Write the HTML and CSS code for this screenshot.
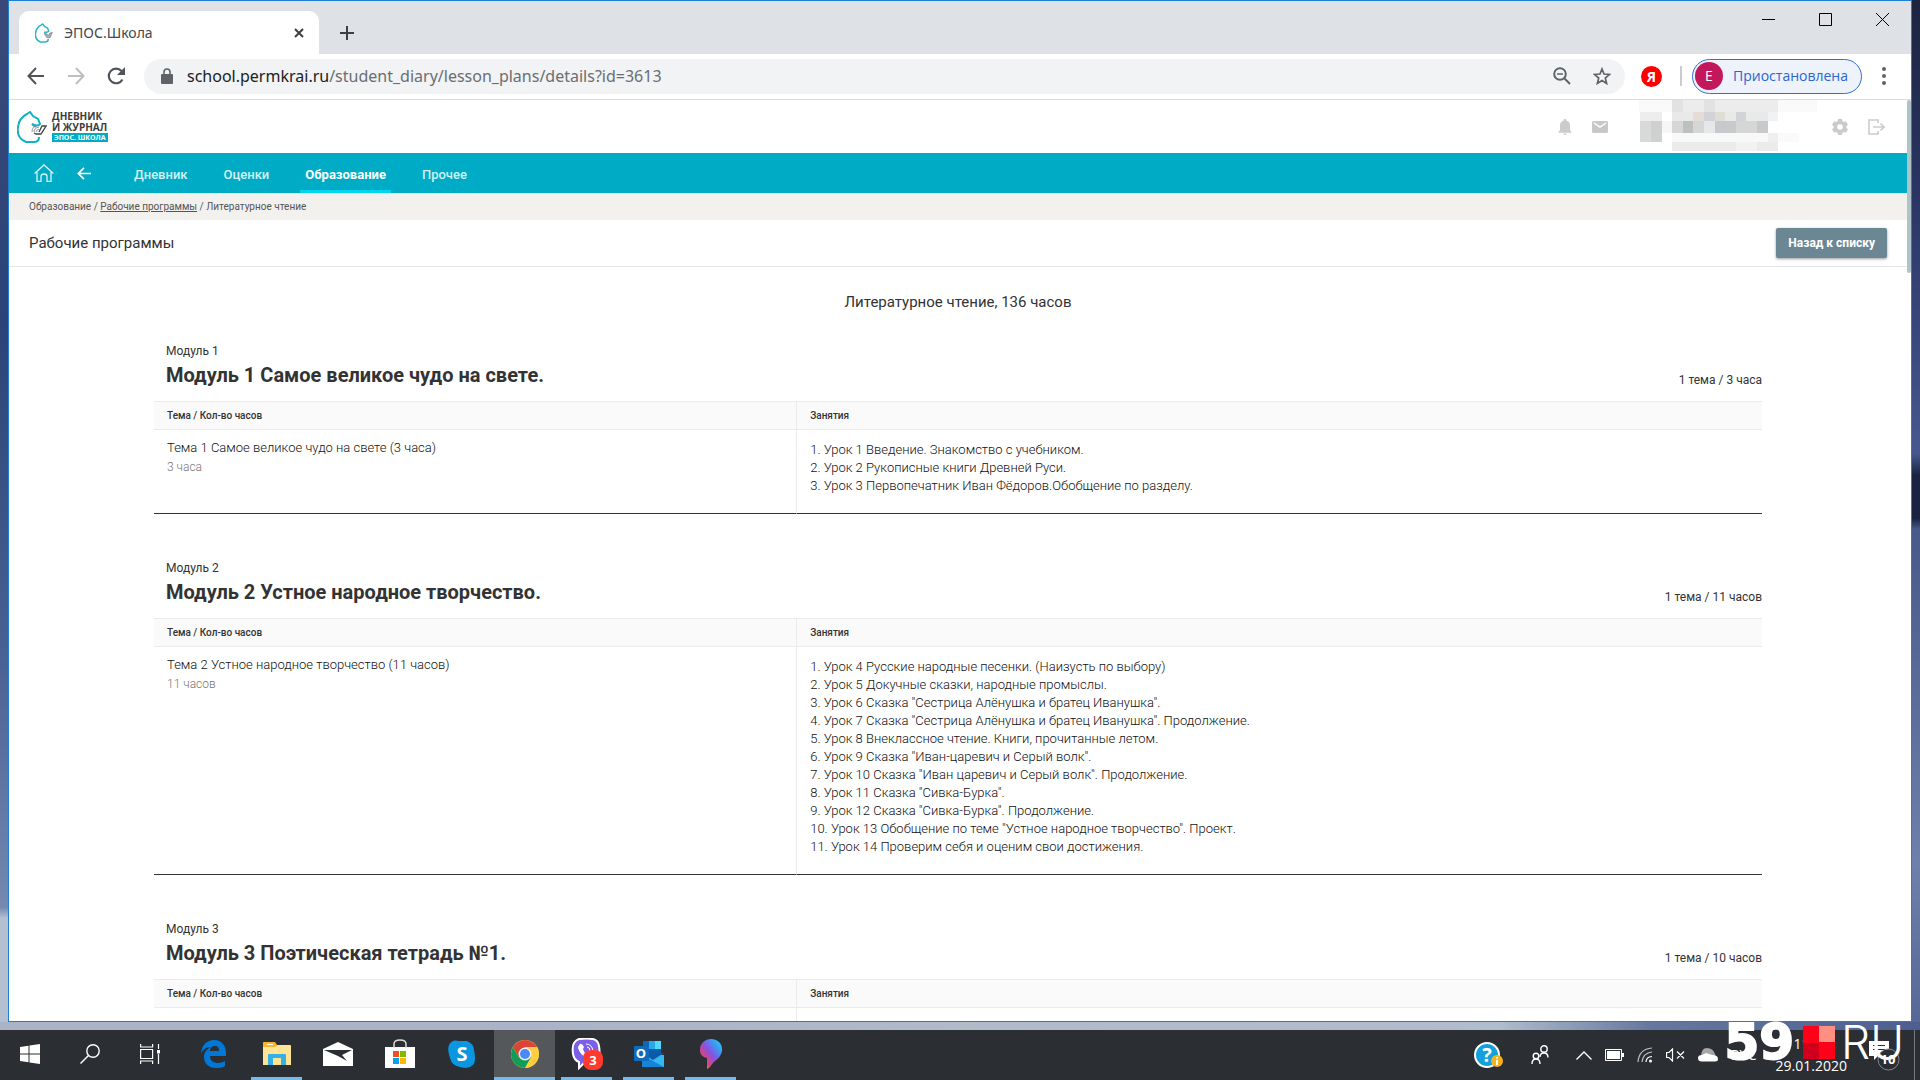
FILE: index.html
```html
<!DOCTYPE html>
<html lang="ru">
<head>
<meta charset="utf-8">
<title>ЭПОС.Школа</title>
<link rel="stylesheet" href="styles.css">
</head>
<body>
<div class="desktop">
  <div class="window">
    <div class="tabstrip">
      <div class="tab">
        <svg class="tab-logo" viewBox="0 0 30 32" fill="none"><path d="M22 26c0 4-2 5-5 5H9C2 28 0 22 1 16 2 8 6 5 10 3l3-2 3 4 5 3 2 5c-2 3-5 1-8 2" stroke="#28b6cb" stroke-width="2.500"/><path d="M15 17l5 7h5l4-9-4 1-3 4-3-3z" stroke="#777" fill="#aaa"/></svg>
        <span class="tab-title">ЭПОС.Школа</span>
        <button class="bare" aria-label="Закрыть вкладку"><svg width="10" height="10" viewBox="0 0 10 10" stroke="#3c4043" stroke-width="2"><path d="M1 1l8 8M9 1L1 9"/></svg></button>
      </div>
      <button class="bare new-tab" aria-label="Новая вкладка"><svg width="16" height="16" viewBox="0 0 16 16" stroke="#3c4043" stroke-width="2"><path d="M8 1v14M1 8h14"/></svg></button>
      <div class="window-buttons">
        <button class="bare" aria-label="Свернуть"><svg width="13" height="13" viewBox="0 0 13 13"><path d="M0 6.500h13" stroke="#000"/></svg></button>
        <button class="bare" aria-label="Развернуть"><svg width="13" height="13" viewBox="0 0 13 13"><path d="M.5.500h12v12H.5z" fill="none" stroke="#000"/></svg></button>
        <button class="bare" aria-label="Закрыть"><svg width="13" height="13" viewBox="0 0 13 13"><path d="M0 0l13 13M13 0L0 13" stroke="#000"/></svg></button>
      </div>
    </div>
    <div class="toolbar">
      <button class="bare" aria-label="Назад"><svg width="18" height="18" viewBox="0 0 18 18" fill="none" stroke="#50545a" stroke-width="2"><path d="M17 9H2M9 1L1.500 9 9 17"/></svg></button>
      <button class="bare" aria-label="Вперёд"><svg width="18" height="18" viewBox="0 0 18 18" fill="none" stroke="#bdbfc2" stroke-width="2"><path d="M1 9h15M9 1l7.500 8L9 17"/></svg></button>
      <button class="bare" aria-label="Обновить"><svg width="18" height="18" viewBox="0 0 18 18"><path d="M15.500 12.500A7.300 7.300 0 1 1 14.500 4" fill="none" stroke="#50545a" stroke-width="2.200"/><path d="M18 0v8h-8z" fill="#50545a"/></svg></button>
      <div class="omnibox">
        <svg width="12" height="16" viewBox="0 0 12 16"><path d="M1 6h10q1 0 1 1v8q0 1-1 1H1q-1 0-1-1V7q0-1 1-1z" fill="#5f6368"/><path d="M3 7V4a3 3 0 0 1 6 0v3" fill="none" stroke="#5f6368" stroke-width="1.600"/></svg>
        <div class="url"><span class="host">school.permkrai.ru</span>/student_diary/lesson_plans/details?id=3613</div>
        <button class="bare" aria-label="Масштаб"><svg width="18" height="18" viewBox="0 0 18 18" fill="none" stroke="#5f6368" stroke-width="2"><circle cx="7" cy="7" r="5.800"/><path d="M11.500 11.500L17 17"/><path d="M4 7h6" stroke-width="1.500"/></svg></button>
        <button class="bare" aria-label="В закладки"><svg width="18" height="18" viewBox="0 0 18 18" fill="none" stroke="#5f6368" stroke-width="1.700"><path d="M9 2l2 5 5.500.4-4.200 3.600 1.300 5.400L9 13.500l-4.600 2.900L5.700 11 1.500 7.400 7 7z"/></svg></button>
      </div>
      <div class="yandex">Я</div>
      <div class="bar-sep"></div>
      <button class="profile"><span class="avatar">Е</span>Приостановлена</button>
      <button class="bare menu" aria-label="Меню"><svg width="4" height="18" viewBox="0 0 4 18" fill="#5f6368"><circle cx="2" cy="2" r="2"/><circle cx="2" cy="9" r="2"/><circle cx="2" cy="16" r="2"/></svg></button>
    </div>

    <div class="viewport">
      <div class="page">
        <header class="site-header">
          <a class="logo" href="#" aria-label="Дневник и журнал ЭПОС. Школа">
            <svg width="30" height="32" viewBox="0 0 30 32" fill="none"><path d="M22 26c0 4-2 5-5 5H9C2 28 0 22 1 16 2 8 6 5 10 3l3-2 3 4 5 3 2 5c-2 3-5 1-8 0 2 2 3 2 4 3" stroke="#14b0c6" stroke-width="2"/><path d="M17 22l2 1h5l5-8-4 0-3 6" stroke="#444" stroke-width="1.300"/><path d="M15 21q0-6 6-7M17 21q0-4 5-5M19 21q0-2 3-3" stroke="#888" stroke-width=".9"/></svg>
            <span class="logo-text"><span>ДНЕВНИК</span><span>И ЖУРНАЛ</span><span class="logo-badge">ЭПОС. ШКОЛА</span></span>
          </a>
          <div class="user-tools">
            <svg width="14" height="16" viewBox="0 0 14 16" fill="#cbcbcb"><path d="M7 0a1.300 1.300 0 0 0-1.300 1.500C3.300 2 2 4 2 6.500V11L.5 13v.7h13V13L12 11V6.500C12 4 10.700 2 8.300 1.500A1.300 1.300 0 0 0 7 0zM5.300 14.500h3.400a1.700 1.500 0 0 1-3.400 0z"/></svg>
            <svg class="mail" width="16" height="12" viewBox="0 0 16 12"><rect width="16" height="12" rx="1.500" fill="#c8c8c8"/><path d="M2 2l6 4 6-4" fill="none" stroke="#fff" stroke-width="1.500"/></svg>
            <svg class="redacted" viewBox="0 0 184 55" shape-rendering="crispEdges">
              <path fill="#ededed" d="M1 12h22v10H1z"/><path fill="#d8dad9" d="M1 22h11v22H1z"/><path fill="#cfd0d0" d="M12 22h11v22H12z"/><path fill="#f6f6f6" d="M23 22h11v12H23z"/>
              <path fill="#ececec" d="M34 0h110v12H34z"/><path fill="#e2e2e4" d="M34 0h11v12H34zM67 0h11v12H67z"/><path fill="#fafafa" d="M0 0h34v12H0zM144 0h40v12h-40z"/>
              <path fill="#e8e9e8" d="M34 12h110v10H34z"/><path fill="#d1d3d8" d="M67 12h11v10H67zM111 12h-11v10h11z"/><path fill="#e5dcd7" d="M56 12h11v10H56z"/><path fill="#deded4" d="M78 12h11v10H78z"/><path fill="#f0f2f3" d="M133 12h11v10h-11z"/>
              <path fill="#d5d7d7" d="M34 22h99v12H34z"/><path fill="#bcc1bd" d="M45 22h11v12H45z"/><path fill="#c8c9ca" d="M78 22h22v12H78zM122 22h11v12h-11z"/><path fill="#e5e8eb" d="M67 22h11v12H67z"/>
              <path fill="#f8f8f8" d="M34 34h110v10H34z"/><path fill="#efefef" d="M133 34h11v10h-11z"/><path fill="#fafafa" d="M144 34h22v10h-22z"/><path fill="#eaebeb" d="M34 44h110v9H34z"/><path fill="#f2f2f2" d="M100 44h22v9h-22z"/>
            </svg>
            <svg width="16" height="16" viewBox="0 0 16 16"><path fill="#cbcbcb" fill-rule="evenodd" d="M6 0h4l.5 2.200 1.300.8 2.200-.7 2 3.400L14.400 7v2L16 10.300l-2 3.400-2.200-.7-1.300.8L10 16H6l-.5-2.200-1.300-.8-2.200.7-2-3.400L1.600 9V7L0 5.700l2-3.400 2.200.7 1.300-.8zM8 5.200a2.800 2.800 0 1 0 0 5.600 2.800 2.800 0 0 0 0-5.600z"/></svg>
            <svg width="17" height="16" viewBox="0 0 17 16" fill="none" stroke="#cbcbcb" stroke-width="1.600"><path d="M10 4V1H1v14h9v-3M5 8h11M12.500 4.500L16 8l-3.500 3.500"/></svg>
          </div>
        </header>
        <nav class="site-nav">
          <a href="#" aria-label="Главная"><svg width="20" height="18" viewBox="0 0 20 18" fill="none" stroke="#d9f3f7" stroke-width="1.300"><path d="M.6 9.500L10 1l9.400 8.500M3 8v9.300h4v-5q0-2.300 3-2.300t3 2.300v5h4V8"/></svg></a>
          <a href="#" aria-label="Назад"><svg width="14" height="13" viewBox="0 0 14 13" fill="none" stroke="#fff" stroke-width="1.700"><path d="M14 6.500H1.500M7 .8L1.300 6.500 7 12.200"/></svg></a>
          <div class="nav-links">
            <a href="#">Дневник</a><a href="#">Оценки</a><a class="active" href="#">Образование</a><a href="#">Прочее</a>
          </div>
        </nav>
        <div class="crumbs">Образование / <a href="#">Рабочие программы</a> / Литературное чтение</div>
        <div class="title-row">
          <h1>Рабочие программы</h1>
          <button class="back">Назад к списку</button>
        </div>
        <main>
          <h2>Литературное чтение, 136 часов</h2>

          <section class="module">
            <div class="module-label">Модуль 1</div>
            <div class="module-head"><h3>Модуль 1 Самое великое чудо на свете.</h3><span>1 тема / 3 часа</span></div>
            <table>
              <thead><tr><th>Тема / Кол-во часов</th><th>Занятия</th></tr></thead>
              <tbody><tr>
                <td><div class="topic">Тема 1 Самое великое чудо на свете (3 часа)</div><div class="hours">3 часа</div></td>
                <td><ol>
                  <li>Урок 1 Введение. Знакомство с учебником.</li>
                  <li>Урок 2 Рукописные книги Древней Руси.</li>
                  <li>Урок 3 Первопечатник Иван Фёдоров.Обобщение по разделу.</li>
                </ol></td>
              </tr></tbody>
            </table>
          </section>

          <section class="module">
            <div class="module-label">Модуль 2</div>
            <div class="module-head"><h3>Модуль 2 Устное народное творчество.</h3><span>1 тема / 11 часов</span></div>
            <table>
              <thead><tr><th>Тема / Кол-во часов</th><th>Занятия</th></tr></thead>
              <tbody><tr>
                <td><div class="topic">Тема 2 Устное народное творчество (11 часов)</div><div class="hours">11 часов</div></td>
                <td><ol>
                  <li>Урок 4 Русские народные песенки. (Наизусть по выбору)</li>
                  <li>Урок 5 Докучные сказки, народные промыслы.</li>
                  <li>Урок 6 Сказка "Сестрица Алёнушка и братец Иванушка".</li>
                  <li>Урок 7 Сказка "Сестрица Алёнушка и братец Иванушка". Продолжение.</li>
                  <li>Урок 8 Внеклассное чтение. Книги, прочитанные летом.</li>
                  <li>Урок 9 Сказка "Иван-царевич и Серый волк".</li>
                  <li>Урок 10 Сказка "Иван царевич и Серый волк". Продолжение.</li>
                  <li>Урок 11 Сказка "Сивка-Бурка".</li>
                  <li>Урок 12 Сказка "Сивка-Бурка". Продолжение.</li>
                  <li>Урок 13 Обобщение по теме "Устное народное творчество". Проект.</li>
                  <li>Урок 14 Проверим себя и оценим свои достижения.</li>
                </ol></td>
              </tr></tbody>
            </table>
          </section>

          <section class="module">
            <div class="module-label">Модуль 3</div>
            <div class="module-head"><h3>Модуль 3 Поэтическая тетрадь №1.</h3><span>1 тема / 10 часов</span></div>
            <table>
              <thead><tr><th>Тема / Кол-во часов</th><th>Занятия</th></tr></thead>
              <tbody><tr><td></td><td class="pending"></td></tr></tbody>
            </table>
          </section>
        </main>
      </div>
      <div class="scrollbar"><div class="thumb"></div></div>
    </div>
  </div>

  <footer class="taskbar">
    <button class="task" aria-label="Пуск"><svg width="20" height="20" viewBox="0 0 20 20" fill="#fff"><path d="M0 3l8.500-1.300v7.800H0zM9.500 1.500L20 0v9.500H9.500zM0 10.500h8.500v7.800L0 17zM9.500 10.500H20V20L9.500 18.500z"/></svg></button>
    <button class="task" aria-label="Поиск"><svg width="20" height="20" viewBox="0 0 20 20" fill="none" stroke="#fff" stroke-width="1.400"><circle cx="13" cy="7" r="6.200"/><path d="M8.500 11.500L.5 19.500"/></svg></button>
    <button class="task" aria-label="Представление задач"><svg width="20" height="20" viewBox="0 0 20 20" fill="none" stroke="#fff" stroke-width="1.200"><path d="M.6 5.500h12v9H.6zM.6 0v3h12V0M.6 20v-3h12v3M18.500 0v5M18.500 10v10"/><path d="M17 6h3v3.500h-3z" fill="#fff" stroke="none"/></svg></button>
    <div class="apps">
    <button class="task wide" aria-label="Edge"><svg width="26" height="28" viewBox="0 0 26 28"><path fill="#0078d7" d="M0 13C1 5 6 0 13 0c8 0 12 6 12 13v3H9c0 5 4 7 8 7 3 0 5-1 7-2v5c-3 2-6 2-9 2C7 28 3 23 3 17c0-5 3-8 7-10-5 0-8 3-10 6zm9-2h9c0-3-1-5-4-5-3 0-5 2-5 5z"/></svg></button>
    <button class="task open" aria-label="Проводник"><svg width="28" height="24" viewBox="0 0 28 24"><path fill="#f6b62e" d="M0 1q0-1 1-1h11l2 3h13v7H0z"/><path fill="#fff" d="M4 2h6v1H4z"/><path fill="#ffe496" d="M0 5h12l3-2h12q1 0 1 1v19H0z"/><path fill="#35b0e6" d="M5 13q0-1 1-1h16q1 0 1 1v10h-5v-7h-8v7H5z"/></svg></button>
    <button class="task wide" aria-label="Почта"><svg width="30" height="24" viewBox="0 0 30 24"><path fill="#fff" d="M0 7L15 0l15 7v17H0z"/><path fill="#2b2e33" d="M1 8h28l-10 5 5 6-9-5z"/></svg></button>
    <button class="task wide" aria-label="Магазин"><svg width="30" height="30" viewBox="0 0 30 30"><path fill="#fff" d="M0 8h30v21H0z"/><path fill="none" stroke="#ddd" stroke-width="1.500" d="M9 9V5q0-4 6-4t6 4v4"/><path fill="#f25022" d="M8 12h6v6H8z"/><path fill="#7fba00" d="M15 12h6v6h-6z"/><path fill="#00a4ef" d="M8 19h6v6H8z"/><path fill="#ffb900" d="M15 19h6v6h-6z"/></svg></button>
    <button class="task wide" aria-label="Skype"><svg width="28" height="28" viewBox="0 0 28 28"><path fill="#0a96e0" d="M1 5Q4-1 11 1h8q7 3 7 9 1 4 1 9 0 8-9 9-3 0-6-1-8-1-10-9Q-1 10 1 5z"/><text x="14" y="21" text-anchor="middle" class="glyph-skype">S</text></svg></button>
    <button class="task open current" aria-label="Chrome"><svg width="28" height="28" viewBox="0 0 28 28"><circle cx="14" cy="14" r="14" fill="#fc4"/><path fill="#db4437" d="M1.900 7A14 14 0 0 1 26.100 7H14L8 17.500z"/><path fill="#0f9d58" d="M1.900 7A14 14 0 0 0 14 28l6-10.500-12 0z"/><path fill="#ffcd40" d="M26.100 7A14 14 0 0 1 14 28l6-10.500L20 8z"/><circle cx="14" cy="14" r="6.500" fill="#f1f1f1"/><circle cx="14" cy="14" r="5" fill="#4a8af4"/></svg></button>
    <button class="task open" aria-label="Viber"><svg width="32" height="32" viewBox="0 0 32 32"><path fill="#7c5fe8" stroke="#fff" stroke-width="2" d="M8 1q8-1 14 0 5 1 6 7 1 6 0 11-2 6-8 6h-7l-5 5v-6q-5-2-6-8-1-8 1-11 2-3 5-4z"/><path fill="#fff" d="M9 6q2-1 4 3l-1 2q1 4 4 5l2-1 3 3q-1 4-5 2-7-3-9-10 0-2 2-4z"/><path fill="none" stroke="#fff" d="M15 6q6 0 7 7M16 9q3 0 3 4"/><rect x="12" y="12" width="20" height="20" rx="8" fill="#ff3b30"/><text x="22" y="27" text-anchor="middle" class="glyph-count">3</text></svg></button>
    <button class="task open" aria-label="Outlook"><svg width="30" height="28" viewBox="0 0 30 28"><path fill="#1066b5" d="M9 1h18v18H9z"/><path fill="#28a8ea" d="M15 1h6v8h-6z"/><path fill="#50d9ff" d="M21 1h6v8h-6z"/><path fill="#0a5cad" d="M15 9h12v8H15z"/><path fill="#35b8f1" d="M8 15l22 0v12H8z"/><path fill="#1784d8" d="M8 27V15l22 12z"/><path fill="#0f5aa8" d="M8 13h22l-11 7z"/><rect y="6" width="15" height="15" rx="1" fill="#0f6cbd"/><text x="7" y="18" text-anchor="middle" class="glyph-outlook">O</text></svg></button>
    <button class="task open" aria-label="Paint 3D"><svg width="24" height="30" viewBox="0 0 24 30"><defs><linearGradient id="drop" x1="1" y1="0" x2="0" y2="1"><stop offset="0" stop-color="#14e0f0"/><stop offset=".3" stop-color="#4a8cf0"/><stop offset=".5" stop-color="#8c4fe0"/><stop offset=".75" stop-color="#e2456a"/><stop offset="1" stop-color="#ffc31a"/></linearGradient></defs><path fill="url(#drop)" d="M12 0c7 0 12 5 11 12-1 6-6 9-9 12-2 2-3 5-6 6V19C3 18 1 15 1 11 1 4 6 0 12 0z"/></svg></button>
    </div>

    <div class="tray">
      <svg class="help" width="30" height="28" viewBox="0 0 30 28"><circle cx="13" cy="14" r="12" fill="#14a0dc" stroke="#fff" stroke-width="2"/><text x="13" y="21" text-anchor="middle" class="glyph-help">?</text><circle cx="23" cy="20" r="6" fill="#f6b21c"/><path stroke="#fff" stroke-width="2" d="M23 16v1.500M23 19v5"/></svg>
      <svg class="people" width="18" height="20" viewBox="0 0 18 20" fill="none" stroke="#fff" stroke-width="1.400"><circle cx="13" cy="4" r="3.200"/><circle cx="5" cy="11" r="2.800"/><path d="M1 19q0-5 4-5t4 5M9 12q0-4 4-4t4 4.500"/></svg>
      <svg class="chevron" width="16" height="9" viewBox="0 0 16 9" fill="none" stroke="#fff" stroke-width="1.400"><path d="M.5 8.500L8 1l7.500 7.500"/></svg>
      <svg width="19" height="12" viewBox="0 0 19 12"><path d="M.5.500h16v11H.5z" fill="none" stroke="#fff"/><path d="M2 2h13v8H2zM17 4h2v4h-2z" fill="#fff"/></svg>
      <svg width="16" height="16" viewBox="0 0 16 16" fill="none" stroke="#fff" stroke-width="1.200"><g stroke-opacity=".7"><path d="M1 15Q2 2 15 1"/><path d="M5 15Q6 6 15 5"/></g><path d="M9 15Q9 10 15 9.500"/><circle cx="13.500" cy="14" r="1.500" fill="#fff" stroke="none"/></svg>
      <svg width="19" height="14" viewBox="0 0 19 14" fill="none" stroke="#fff" stroke-width="1.200"><path d="M.6 4.500H3L6.500 1v12L3 9.500H.6zM11 3.500l7 7M18 3.500l-7 7"/></svg>
      <svg class="cloud" width="20" height="14" viewBox="0 0 20 14"><path fill="#a6a6a6" d="M3 9Q3 0 9 0q6 0 8 6l1 4z"/><path fill="#fff" d="M3 13.500Q0 13 0 10q0-3 4-3l4-2 6 2q6 0 6 4 0 2.500-3 2.500z"/></svg>
      <span class="lang">РУС</span>
      <div class="clock"><span>11:53</span><span>29.01.2020</span></div>
      <button class="bare notices" aria-label="Уведомления"><svg width="32" height="32" viewBox="0 0 32 32"><path fill="#fff" d="M0 2h20v15H9l-4 4v-4H0z"/><path stroke="#2b2e33" d="M4 6.500h12M4 10.500h12"/><circle cx="19.500" cy="20.500" r="10.500" fill="#2b2e33" stroke="#84868a"/><text x="19" y="25" text-anchor="middle" class="glyph-notices">10</text></svg></button>
      <div class="show-desktop"></div>
    </div>
  </footer>

  <div class="watermark"><b>59</b><i class="squares"></i><span>RU</span></div>
</div>
</body>
</html>
```
FILE: styles.css
```css
* { box-sizing: border-box; }
body { margin: 0; font-family: Roboto, "Liberation Sans", sans-serif; color: #333; }
button { font: inherit; cursor: pointer; }
h1, h2, h3, ol { margin: 0; padding: 0; }
svg { display: block; flex: none; }
.bare { border: 0; padding: 0; background: none; display: flex; flex: none; }

.desktop {
  position: relative;
  height: 100vh;
  display: flex;
  flex-direction: column;
  overflow: hidden;
  background:
    linear-gradient(90deg, #a9b4c8 0, #a9b4c8 28%, #b2bac8 50%, #b0bdce 78%, #66779f 86%, #4d5f90 100%) 0 100% / 100% 58px no-repeat,
    linear-gradient(180deg, #1d2440 0, #2a3564 18%, #46588f 42%, #1a2342 44%, #1a2342 48%, #47598a 49%, #6d80aa 80%, #4d5f90 100%) 100% 0 / 12px 100% no-repeat,
    linear-gradient(180deg, #3a4878 0, #2c4377 30%, #4a5f92 60%, #7488b0 84%, #b4bfd0 85%) 0 0 / 12px 100% no-repeat;
}
.window {
  flex: 1;
  min-height: 0;
  margin: 0 8px 8px;
  border: 1px solid #1c7fd4;
  background: #fff;
  display: flex;
  flex-direction: column;
}

.tabstrip { flex: none; height: 53px; padding: 10px 22px 0 10px; background: #dee1e6; display: flex; }
.tab { width: 300px; padding: 0 15px 0 16px; border-radius: 10px 10px 0 0; background: #fff; display: flex; align-items: center; gap: 11px; }
.tab-logo { width: 18px; height: 20px; }
.tab-title { flex: 1; font: 14px/20px "Noto Sans", sans-serif; color: #45484c; }
.new-tab { margin: 14px 0 0 20px; align-self: flex-start; }
.window-buttons { margin-left: auto; display: flex; gap: 44px; margin-top: 2px; }
.window-buttons .bare { align-self: flex-start; }

.toolbar { flex: none; height: 46px; padding: 0 25px 1px 18px; border-bottom: 1px solid #dadce0; display: flex; align-items: center; gap: 22px; }
.omnibox { flex: 1; height: 35px; margin-left: -3px; padding: 0 14px 0 17px; border-radius: 18px; background: #f1f3f4; display: flex; align-items: center; gap: 22px; }
.url { flex: 1; margin-left: -8px; font: 16px/24px "Noto Sans", sans-serif; color: #6a6e73; }
.host { color: #202124; }
.yandex { width: 21px; height: 21px; margin-left: -6px; border-radius: 50%; background: #f00; color: #fff; font: bold 14px/21px "Open Sans", sans-serif; text-align: center; }
.bar-sep { width: 2px; height: 20px; margin: 0 -12px 0 -4px; background: #ccc; }
.profile { height: 35px; margin-right: -2px; padding: 0 13px 0 2px; border: 1px solid #3070d6; border-radius: 18px; background: #edf2fb; color: #2a66d0; font: 14px/20px "Open Sans", sans-serif; display: flex; align-items: center; gap: 10px; }
.avatar { width: 28px; height: 28px; border-radius: 50%; background: #c2185b; color: #fff; line-height: 28px; }

.viewport { flex: 1; min-height: 0; display: flex; overflow: hidden; }
.page { flex: 1; }
.scrollbar { width: 4px; }
.thumb { height: 173px; background: #aec3c6; border-radius: 2px; }

.site-header { height: 53px; padding: 0 22px 0 8px; display: flex; justify-content: space-between; align-items: center; }
.logo { display: flex; gap: 5px; color: #3d3d3d; text-decoration: none; }
.logo-text { display: flex; flex-direction: column; align-items: flex-start; font: bold 10px/11px "Open Sans", sans-serif; }
.logo-badge { padding: 0 2px; background: #00acc5; color: #fff; font-size: 7px; line-height: 9px; }
.user-tools { display: flex; align-items: center; gap: 20px; }
.redacted { width: 184px; height: 53px; margin-left: 8px; margin-right: -8px; }

.site-nav { height: 40px; padding-left: 25px; background: #00acc5; display: flex; align-items: center; gap: 23px; }
.nav-links { align-self: stretch; margin-left: 15px; display: flex; gap: 26px; }
.nav-links a { padding: 0 5px; border-bottom: 3px solid transparent; color: #d4f1f5; font-size: 13px; font-weight: 500; line-height: 43px; text-decoration: none; }
.nav-links .active { border-color: #00d5f2; color: #fff; font-weight: 700; }

.crumbs { height: 27px; padding-left: 20px; background: #f2f1ed; color: #555; font-size: 10px; line-height: 27px; }
.crumbs a { color: inherit; }
.title-row { height: 47px; padding: 0 20px; border-bottom: 1px solid #e5e5e5; display: flex; align-items: center; justify-content: space-between; }
h1 { font-size: 15px; font-weight: 400; }
.back { height: 30px; padding: 0 12px; border: 0; border-radius: 2px; background: #6b8794; color: #fff; font-size: 12px; font-weight: 700; box-shadow: 0 1px 3px rgba(0, 0, 0, .4); }

main { padding: 0 145px; }
h2 { padding: 24px 0 26px; font-size: 15px; font-weight: 400; line-height: 22px; text-align: center; }
.module { margin-bottom: 42px; }
.module-label { padding-left: 12px; font-size: 12px; line-height: 24px; }
.module-head { height: 38px; padding-left: 12px; display: flex; justify-content: space-between; }
h3 { font-size: 20px; font-weight: 700; line-height: 25px; }
.module-head span { font-size: 12px; line-height: 35px; }

table { width: 100%; border-collapse: separate; border-spacing: 0; table-layout: fixed; }
th { width: 60%; height: 29px; padding: 0 13px; border: solid #ebebeb; border-width: 1px 0; background: #fafafa; font-size: 10px; font-weight: 500; line-height: 27px; text-align: left; }
th:first-child { width: 40%; border-right-width: 1px; }
td { padding: 11px 13px 18px; border-bottom: 1px solid #333; vertical-align: top; color: #111; font-size: 13px; font-weight: 300; line-height: 18px; }
td:first-child { padding-top: 9px; border-right: 1px solid #ebebeb; }
.hours { font-size: 12px; line-height: 20px; color: #777; }
.pending { height: 300px; }
ol { list-style-position: inside; }

.taskbar { flex: none; height: 50px; background: #2b2e33; display: flex; color: #fff; }
.apps { margin-left: 3px; display: flex; }
.task { width: 60px; padding: 0; border: 0; border-bottom: 3px solid transparent; background: none; display: flex; align-items: center; justify-content: center; }
.wide { width: 62px; }
.open { width: 51px; margin: 0 5px 0 6px; border-color: #76b9ed; }
.current { width: 61px; margin: 0 0 0 1px; background: #55585b; }
.tray { margin-left: auto; display: flex; align-items: center; gap: 13px; font: 14px/22px "Open Sans", sans-serif; }
.people { margin-left: 14px; }
.chevron { margin-left: 14px; }
.lang { margin-right: 6px; }
.clock { display: flex; flex-direction: column; align-items: center; }
.notices { margin-left: 9px; }
.show-desktop { width: 6px; align-self: stretch; border-left: 1px solid #77797c; }
.glyph-skype { font: bold 20px "Open Sans", sans-serif; fill: #fff; }
.glyph-count { font: bold 13px "Open Sans", sans-serif; fill: #fff; }
.glyph-outlook { font: bold 13px "Open Sans", sans-serif; fill: #fff; }
.glyph-help { font: bold 20px "Open Sans", sans-serif; fill: #fff; }
.glyph-notices { font: bold 13px "Open Sans", sans-serif; fill: #fff; }

.watermark { position: absolute; right: 16px; bottom: 19px; height: 37px; display: flex; align-items: center; color: #fff; }
.watermark b { font: bold 50px/37px "DejaVu Sans", sans-serif; -webkit-text-stroke: 2px #fff; }
.watermark span { font: 300 46px/37px Inter, sans-serif; }
.squares { width: 32px; height: 33px; margin: 0 6px 0 9px; background: conic-gradient(#ff8f80 25%, #ff0019 0 50%, #d0001c 0 75%, #ff0019 0); }
```
